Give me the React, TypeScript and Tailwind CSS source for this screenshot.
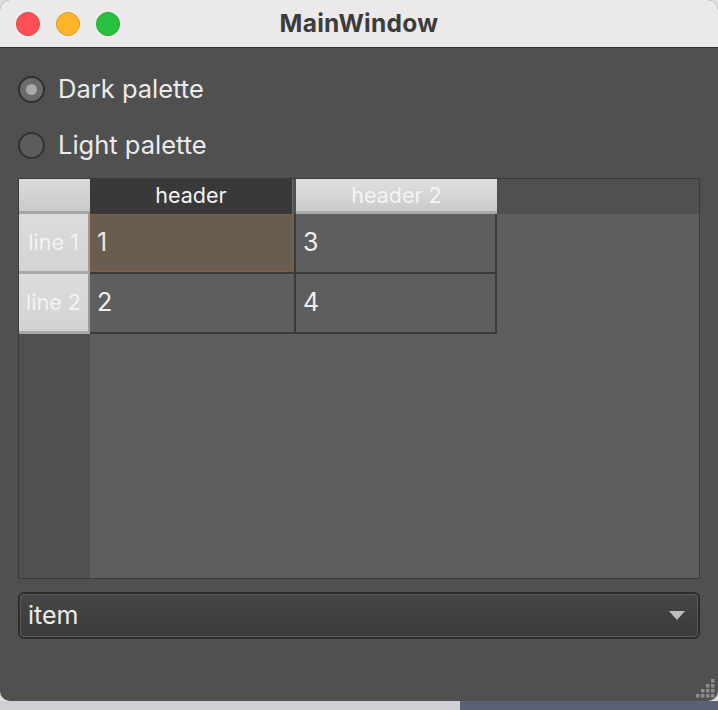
import React from 'react';

const font = { fontFamily: 'Inter, "Noto Sans", sans-serif' };

function Radio({ checked, label }: { checked?: boolean; label: string }) {
  return (
    <div className="flex h-[56px] items-center">
      <div
        className={
          checked
            ? 'flex h-[27px] w-[27px] items-center justify-center rounded-full border-2 border-[#2f2f2f] bg-[#6a6a6a]'
            : 'h-[27px] w-[27px] rounded-full border-2 border-[#323232] bg-[#5c5c5c]'
        }
      >
        {checked && <div className="h-[11px] w-[11px] rounded-full bg-[#a9a9a9]" />}
      </div>
      <span className="ml-[13px] text-[25.5px] leading-none text-[#ebebeb]">{label}</span>
    </div>
  );
}

function RowHeader({ label }: { label: string }) {
  return (
    <div className="flex h-[60px] items-center justify-center border-b-[3px] border-r-[2px] border-b-[#a9a9a9] border-r-[#9c9c9c] bg-gradient-to-b from-[#dcdcdc] to-[#d3d3d3] text-[21.5px] text-[#f3f3f3]">
      {label}
    </div>
  );
}

function Cell({ value, selected, w }: { value: string; selected?: boolean; w: string }) {
  return (
    <div
      className={
        (w === 'a' ? 'w-[206px] ' : 'w-[201px] ') +
        'flex h-[60px] border-b-2 border-r-2 border-[#3a3a3a]'
      }
    >
      <div
        className={
          selected
            ? 'flex flex-1 items-center border border-[#7c6147] bg-[#6a5d50] pl-[6px] text-[25px] text-[#f0e6dc]'
            : 'flex flex-1 items-center bg-[#5e5e5e] pl-[7px] text-[25px] text-[#efefef]'
        }
      >
        {value}
      </div>
    </div>
  );
}

function Grip() {
  const pts: [number, number][] = [];
  for (let r = 0; r < 4; r++) {
    for (let c = 3 - r; c < 4; c++) pts.push([c * 5, r * 5]);
  }
  return (
    <svg width="22" height="22" viewBox="0 0 22 22" className="absolute bottom-[2px] right-[2px]">
      {pts.map(([x, y], i) => (
        <rect key={i} x={x + 2} y={y + 2} width="3.5" height="3.5" fill="#8d8d8d" />
      ))}
    </svg>
  );
}

export default function App() {
  return (
    <div className="flex h-[710px] w-[718px] flex-col bg-[#dedede]" style={font}>
      <div className="relative flex h-[701px] flex-col overflow-hidden rounded-[10px] bg-[#505050]">
        {/* title bar */}
        <div className="relative flex h-[48px] shrink-0 items-center border-b border-[#2e2e2e] bg-[#ebe9ea]">
          <div className="ml-[16px] flex gap-[16px]">
            <div className="h-[24px] w-[24px] rounded-full border border-[#e1453f] bg-[#fe4f55]" />
            <div className="h-[24px] w-[24px] rounded-full border border-[#e19c21] bg-[#feb42a]" />
            <div className="h-[24px] w-[24px] rounded-full border border-[#1ea832] bg-[#29c13f]" />
          </div>
          <div className="absolute inset-x-0 top-[5px] text-center text-[24.5px] font-bold tracking-[0.3px] text-[#3c3c3c]">
            MainWindow
          </div>
        </div>

        <div className="flex flex-1 flex-col px-[18px] pt-[13px]">
          <Radio checked label="Dark palette" />
          <Radio label="Light palette" />

          {/* table */}
          <div className="mt-[5px] flex h-[401px] border border-[#3b3b3b] bg-[#505050]">
            <div className="flex w-[71px] flex-col">
              <div className="h-[35px] border-b-[3px] border-[#a5a5a5] bg-gradient-to-b from-[#dadada] to-[#cacaca]" />
              <RowHeader label="line 1" />
              <RowHeader label="line 2" />
              <div className="flex-1 bg-[#505050]" />
            </div>
            <div className="flex flex-1 flex-col">
              <div className="flex h-[35px] bg-[#505050]">
                <div className="flex w-[206px]">
                  <div className="flex w-[202px] items-center justify-center bg-[#393939] pb-[2px] text-[21.5px] text-[#f2f2f2]">
                    header
                  </div>
                  <div className="w-[1px] bg-[#6a6a6a]" />
                </div>
                <div className="flex w-[201px] items-center justify-center border-b-[3px] border-[#a9a9a9] bg-gradient-to-b from-[#dfdfdf] to-[#cbcbcb] text-[21.5px] text-[#f4f4f4]">
                  header 2
                </div>
              </div>
              <div className="flex flex-1 flex-col bg-[#5e5e5e]">
                <div className="flex">
                  <Cell value="1" selected w="a" />
                  <Cell value="3" w="b" />
                </div>
                <div className="flex">
                  <Cell value="2" w="a" />
                  <Cell value="4" w="b" />
                </div>
              </div>
            </div>
          </div>

          {/* combo box */}
          <div className="mt-[13px] h-[47px] rounded-[6px] border-2 border-[#2d2d2d]">
            <div className="flex h-full items-center justify-between rounded-[4px] border border-[#595959] bg-gradient-to-b from-[#464646] to-[#3b3b3b] pl-[7px] pr-[12px]">
              <span className="text-[25px] leading-none text-[#ececec]">item</span>
              <svg width="16" height="9" viewBox="0 0 16 9">
                <path d="M0 0 H16 L8 9 Z" fill="#bdbdbd" />
              </svg>
            </div>
          </div>
        </div>
        <Grip />
      </div>
      <div className="flex flex-1">
        <div className="w-[460px] bg-[#cfd0d5]" />
        <div className="flex-1 bg-[#5a6174]" />
      </div>
    </div>
  );
}
